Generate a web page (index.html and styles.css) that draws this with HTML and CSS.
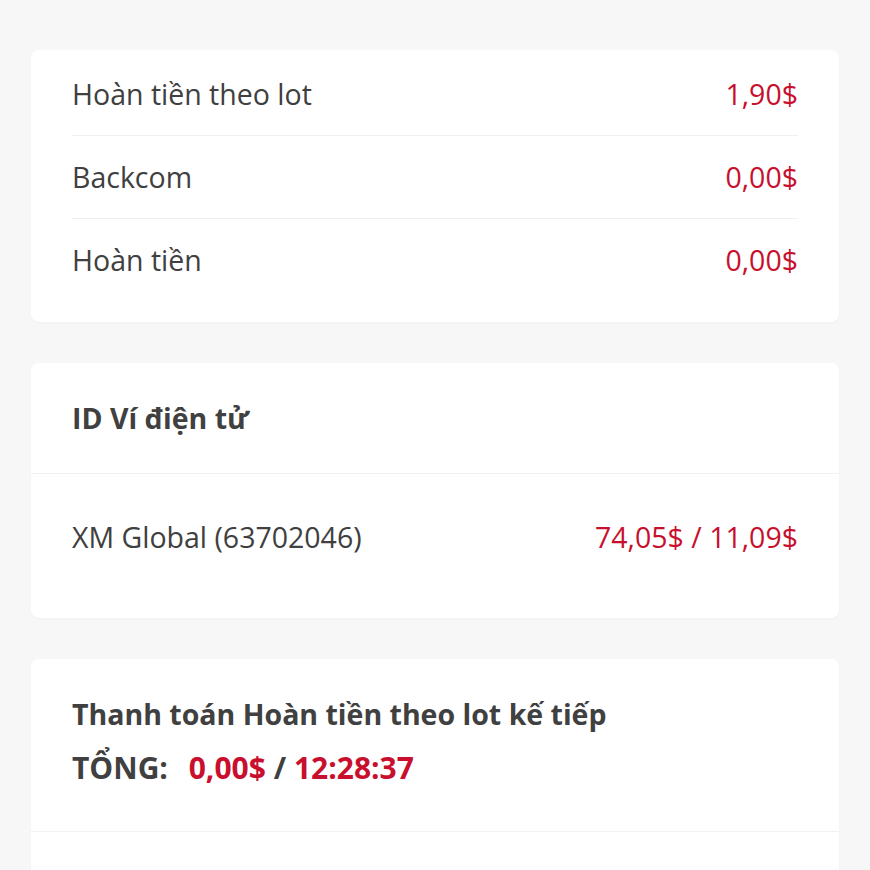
FILE: index.html
```html
<!DOCTYPE html>
<html lang="vi">
<head>
    <meta charset="UTF-8">
    <meta name="viewport" content="width=device-width, initial-scale=1.0">
    <title>Hoàn tiền</title>
    <link rel="stylesheet" href="styles.css">
</head>
<body>

    <div class="page">

        <!-- Rebate summary -->
        <div class="card card-list">
            <div class="row">
                <span class="label">Hoàn tiền theo lot</span>
                <span class="value">1,90$</span>
            </div>
            <div class="row">
                <span class="label">Backcom</span>
                <span class="value">0,00$</span>
            </div>
            <div class="row">
                <span class="label">Hoàn tiền</span>
                <span class="value">0,00$</span>
            </div>
        </div>

        <!-- Wallet IDs -->
        <div class="card">
            <div class="card-head">
                <h3>ID Ví điện tử</h3>
            </div>
            <div class="wallet-row">
                <span class="label">XM Global (63702046)</span>
                <span class="value">74,05$ / 11,09$</span>
            </div>
        </div>

        <!-- Next payment -->
        <div class="card">
            <div class="card-head next-pay">
                <h3>Thanh toán Hoàn tiền theo lot kế tiếp</h3>
                <p class="total">TỔNG: <span class="red">0,00$</span> / <span class="red">12:28:37</span></p>
            </div>
            <div class="wallet-row">
                <span class="label">Hoàn tiền theo lot</span>
                <span class="value">0,00$</span>
            </div>
        </div>

    </div>

</body>
</html>
```

FILE: styles.css
```css
body {
    margin: 0;
    font-family: "Open Sans", "Noto Sans", sans-serif;
    background-color: #f7f7f7;
    color: #404040;
}

.page {
    padding: 50px 31px 0;
}

.card {
    background-color: #fff;
    border-radius: 8px;
    margin-bottom: 41px;
    box-shadow: 0 1px 2px rgba(0, 0, 0, 0.03);
}

.label, .value {
    font-size: 28.5px;
    line-height: 30px;
}

.value {
    color: #c8102e;
}

.red {
    color: #c8102e;
}

/* simple list card */
.card-list {
    padding: 3px 41px 21px;
}

.row {
    display: flex;
    justify-content: space-between;
    align-items: center;
    height: 82px;
}

.row + .row {
    border-top: 1px solid #f0f0f0;
}

/* cards with a header */
.card-head {
    padding: 40px 41px;
    border-bottom: 1px solid #f2f2f2;
}

.card-head h3 {
    margin: 0;
    font-size: 28.5px;
    line-height: 30px;
    font-weight: 700;
}

.next-pay {
    padding: 40px 41px 48px;
}

.total {
    margin: 24px 0 0;
    font-size: 30px;
    line-height: 30px;
    font-weight: 700;
}

.total .red:first-child {
    margin-left: 13px;
}

.wallet-row {
    display: flex;
    justify-content: space-between;
    align-items: center;
    padding: 48px 41px 66px;
}
```
